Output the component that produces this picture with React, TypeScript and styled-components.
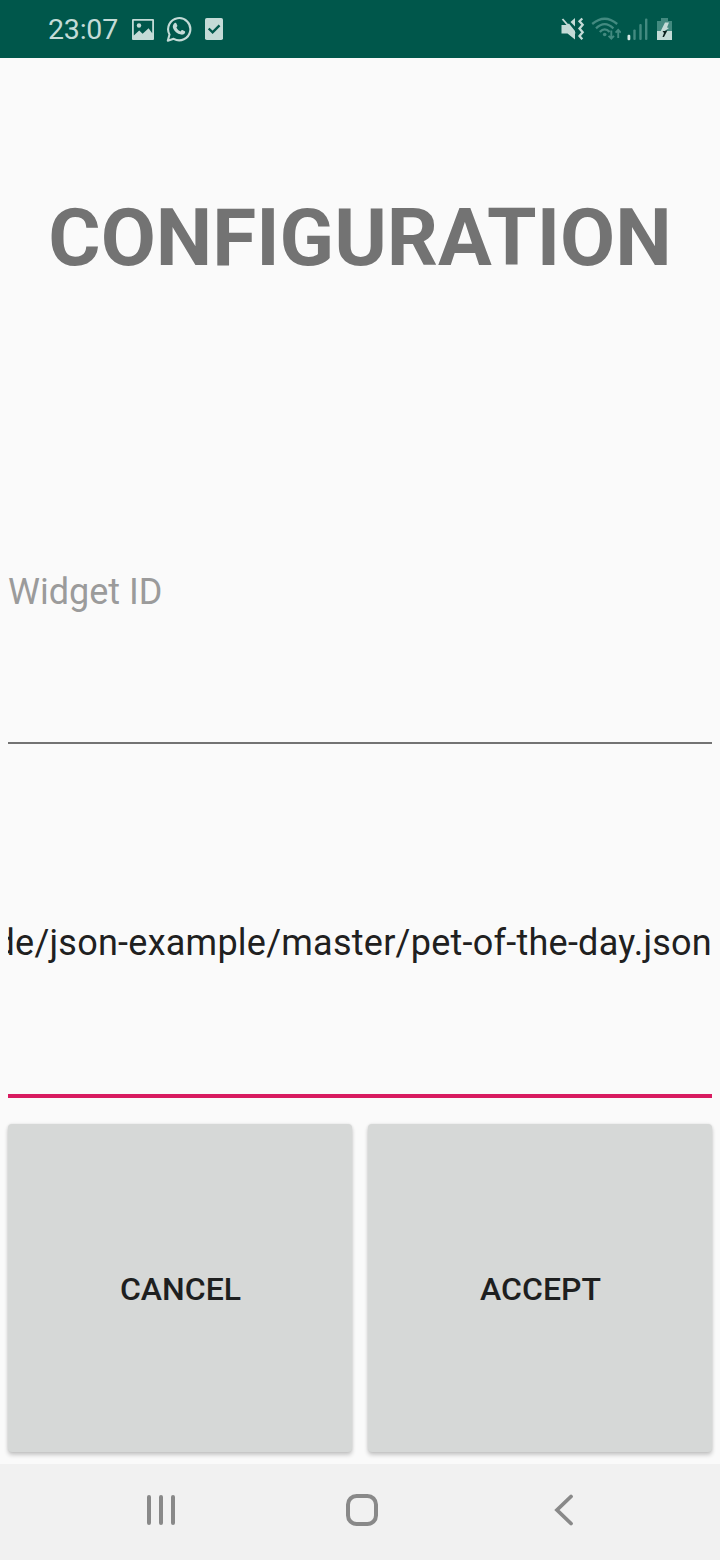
import React from 'react';
import styled, { createGlobalStyle } from 'styled-components';

const GlobalStyle = createGlobalStyle`
  * { box-sizing: border-box; }
  body { margin: 0; background: #fafafa; font-family: Roboto, sans-serif; }
`;

const Screen = styled.div`
  width: 720px;
  height: 1560px;
  display: flex;
  flex-direction: column;
  overflow: hidden;
  background: #fafafa;
`;

const StatusBar = styled.header`
  height: 58px;
  flex: none;
  display: flex;
  align-items: center;
  justify-content: space-between;
  padding: 0 47px 0 48px;
  background: #00574b;
  color: #c4dbd7;
`;

const StatusGroup = styled.div<{ $gap: number }>`
  display: flex;
  align-items: center;
  gap: ${(p) => p.$gap}px;
  svg { display: block; }
`;

const Clock = styled.span`
  width: 72px;
  padding-top: 1px;
  font-size: 28.5px;
  line-height: 34px;
  letter-spacing: -0.2px;
  white-space: nowrap;
`;

const Main = styled.main`
  flex: 1;
  display: grid;
  grid-template-rows: 352fr 351fr 351fr 352fr;
`;

const Title = styled.h1`
  margin: 0;
  padding-top: 7px;
  display: flex;
  align-items: center;
  justify-content: center;
  font-size: 80px;
  font-weight: 700;
  line-height: 94px;
  color: #737373;
`;

const Field = styled.div<{ $active?: boolean; $end?: boolean }>`
  margin: 0 8px ${(p) => (p.$active ? 14 : 17)}px;
  padding-top: ${(p) => (p.$active ? 31 : 32)}px;
  display: flex;
  align-items: center;
  justify-content: ${(p) => (p.$end ? 'flex-end' : 'flex-start')};
  overflow: hidden;
  border-bottom: ${(p) => (p.$active ? '4px solid #d81b60' : '2px solid #737373')};
`;

const FieldText = styled.span<{ $hint?: boolean }>`
  font-size: 36px;
  line-height: 42px;
  letter-spacing: ${(p) => (p.$hint ? '0' : '0.25px')};
  white-space: nowrap;
  color: ${(p) => (p.$hint ? '#9b9b9b' : '#202020')};
`;

const Actions = styled.div`
  display: grid;
  grid-template-columns: 1fr 1fr;
  gap: 16px;
  padding: 12px 8px;
`;

const Button = styled.button`
  border: 0;
  border-radius: 4px;
  padding: 2px 0 0 1px;
  background: #d6d8d7;
  color: #1e1f1f;
  font: 500 32px/38px Roboto, sans-serif;
  box-shadow: 0 3px 4px rgba(0, 0, 0, 0.2), 0 0 3px rgba(0, 0, 0, 0.1);
`;

const NavBar = styled.nav`
  height: 96px;
  flex: none;
  display: flex;
  align-items: center;
  justify-content: space-between;
  padding: 0 140px 4px;
  background: #f1f1f1;
  svg { display: block; }
`;

const ImageIcon = () => (
  <svg width="22" height="22" viewBox="0 0 22 22">
    <path fill="currentColor" fillRule="evenodd" d="M1 1h20a1 1 0 0 1 1 1v19a1 1 0 0 1-1 1H1a1 1 0 0 1-1-1V2a1 1 0 0 1 1-1ZM1.800 2.800v14.600l5.400-5 3.400 3.300 6-5.400 3.600 5V2.800Z" />
    <circle cx="7" cy="7.500" r="2.200" fill="currentColor" />
  </svg>
);

const WhatsAppIcon = () => (
  <svg width="27" height="26" viewBox="0 0 27 26">
    <path fill="none" stroke="currentColor" strokeWidth="2.100" strokeLinejoin="round" d="M1.800 24.700 3.500 18.500A11.100 11.100 0 1 1 7.700 22.800Z" />
    <path fill="currentColor" d="M8.700 7.100c.6-.5 1.300-.4 1.600.2l1 2.300c.2.500 0 .9-.9 1.900.9 1.900 2.300 3.200 4.200 4 .9-1.100 1.300-1.600 1.800-1.400l2.400 1.200c.5.300.4 1 .1 1.700-.6 1.300-2.300 1.900-3.800 1.600-4.100-.9-6.900-3.400-8.100-6.600-.7-2.100.6-4.300 1.700-4.900Z" />
  </svg>
);

const TaskIcon = () => (
  <svg width="18" height="22" viewBox="0 0 18 22">
    <rect width="18" height="22" rx="1.800" fill="currentColor" />
    <path d="m3.700 10.500 3.900 3.900 6.900-7" fill="none" stroke="#00574b" strokeWidth="2.400" />
  </svg>
);

const MuteIcon = () => (
  <svg width="24" height="24" viewBox="0 0 24 24">
    <path fill="currentColor" d="M.500 8h5L8 6.500l6 7.500v8.500L6.500 16.500h-6Z" />
    <path fill="currentColor" d="M9.500 5 14 1v8.500Z" />
    <path stroke="currentColor" strokeWidth="1.900" d="m1.500 2 12.500 14.500" />
    <path fill="none" stroke="currentColor" strokeWidth="2.300" d="m21.300 1.500-2.800 2.700 3.200 3.600-3.200 3.700 3.200 3.800-3.200 3.700 2.800 3.200" />
  </svg>
);

const WifiIcon = () => (
  <svg width="30" height="24" viewBox="0 0 30 24" fill="none" stroke="#438a80" strokeWidth="2.300">
    <path d="M1.200 7q12.500-10.500 25 0M5 11.300q8.700-8.400 17.400 0M8.800 15.100q4.900-5.400 9.800 0" />
    <circle cx="13.700" cy="17.500" r="1.800" fill="#438a80" stroke="none" />
    <path strokeWidth="1.900" d="M20.300 13.500v8m-2.700-2.700 2.700 2.800 2.700-2.800M27.200 21v-8m-2.600 2.700 2.600-2.800 2.600 2.800" />
  </svg>
);

const SignalIcon = () => (
  <svg width="24" height="24" viewBox="0 0 24 24" fill="#438a80">
    <rect x="0.500" y="17.700" width="2.800" height="5.500" rx="1.200" fill="#d5e9e5" />
    <rect x="6.300" y="12.500" width="2.400" height="10.500" rx="1" />
    <rect x="12.300" y="7" width="2.400" height="16" rx="1" />
    <rect x="18" y="1.500" width="2.400" height="21.500" rx="1" />
  </svg>
);

const BatteryIcon = () => (
  <svg width="16" height="24" viewBox="0 0 16 24">
    <path fill="#438a80" d="M4 1h7v3h4v10H0V4h4Z" />
    <path fill="#c4dbd7" d="M0 14h15v9H0Z" />
    <path fill="#c4dbd7" d="M8 5.500 3.500 14.500H7l5-3.500-2-.500 2-5Z" />
    <path fill="#0b1f1c" d="M5.500 14h2.500l2.500-.700L7 20H5.500l1.500-4Z" />
  </svg>
);

const RecentsIcon = () => (
  <svg width="42" height="40" viewBox="0 0 42 40" stroke="#898989" strokeWidth="4" strokeLinecap="round">
    <path d="M9 7v26M21 7v26M33 7v26" />
  </svg>
);

const HomeIcon = () => (
  <svg width="40" height="40" viewBox="0 0 40 40">
    <rect x="7" y="6" width="28" height="28" rx="8.500" fill="none" stroke="#898989" strokeWidth="4" />
  </svg>
);

const BackIcon = () => (
  <svg width="40" height="40" viewBox="0 0 40 40">
    <path d="M31 6.500 17 20l14 13.500" fill="none" stroke="#898989" strokeWidth="3.800" strokeLinecap="round" />
  </svg>
);

export default function App() {
  return (
    <>
      <GlobalStyle />
      <Screen>
        <StatusBar>
          <StatusGroup $gap={12}>
            <Clock>23:07</Clock>
            <ImageIcon />
            <WhatsAppIcon />
            <TaskIcon />
          </StatusGroup>
          <StatusGroup $gap={6}>
            <MuteIcon />
            <WifiIcon />
            <SignalIcon />
            <BatteryIcon />
          </StatusGroup>
        </StatusBar>
        <Main>
          <Title>CONFIGURATION</Title>
          <Field>
            <FieldText $hint>Widget ID</FieldText>
          </Field>
          <Field $active $end>
            <FieldText>de/json-example/master/pet-of-the-day.json</FieldText>
          </Field>
          <Actions>
            <Button type="button">CANCEL</Button>
            <Button type="button">ACCEPT</Button>
          </Actions>
        </Main>
        <NavBar>
          <RecentsIcon />
          <HomeIcon />
          <BackIcon />
        </NavBar>
      </Screen>
    </>
  );
}
